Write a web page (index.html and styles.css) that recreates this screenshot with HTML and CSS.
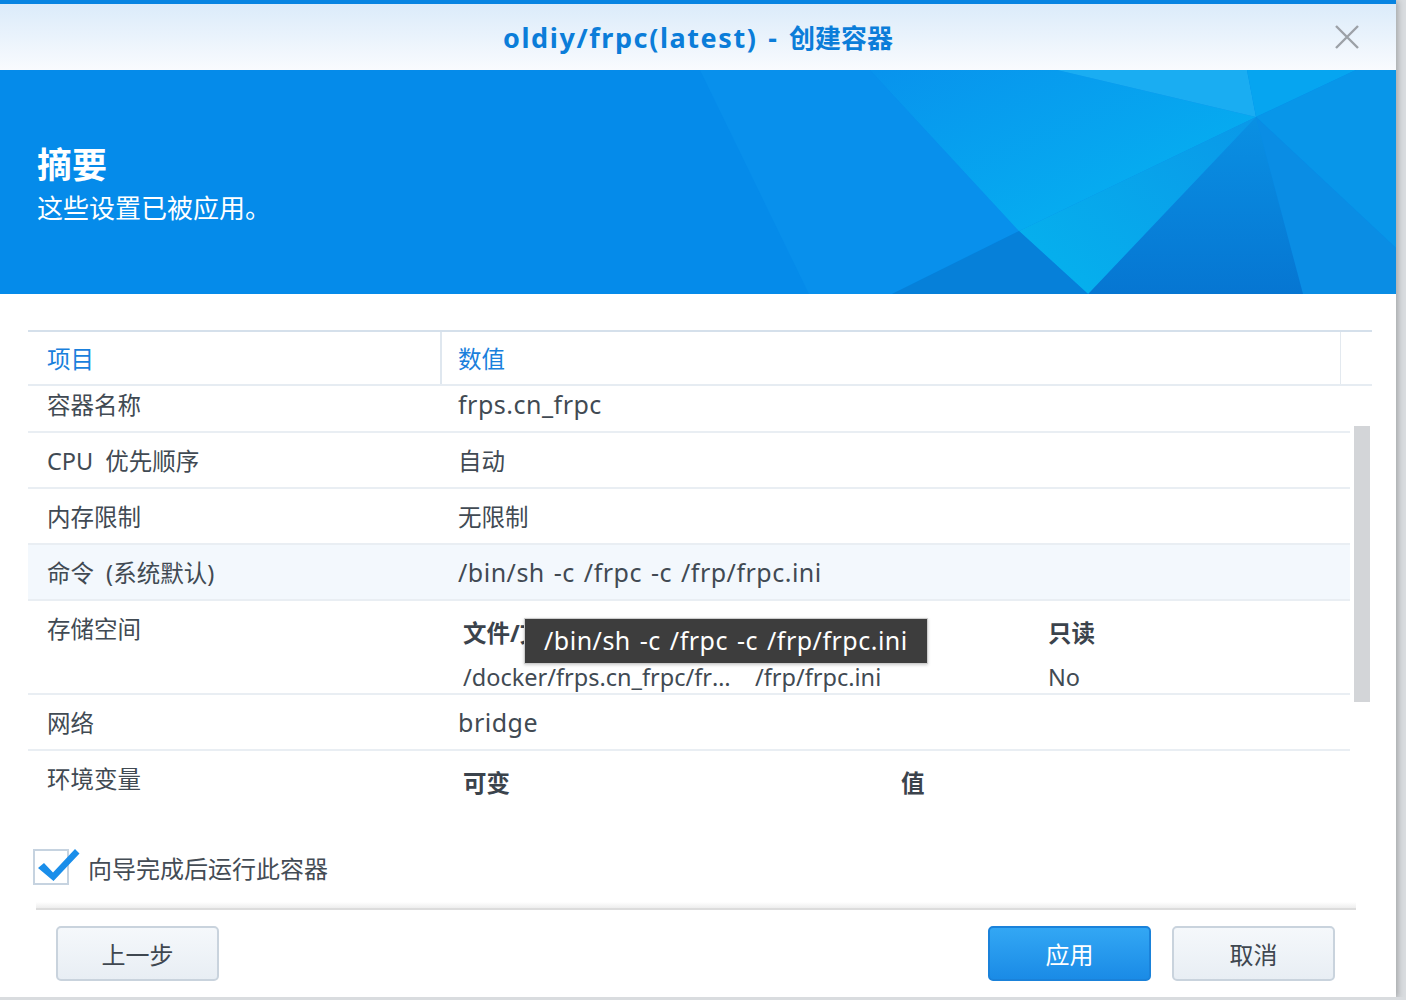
FILE: index.html
```html
<!DOCTYPE html>
<html lang="zh-CN">
<head>
  <meta charset="UTF-8">
  <title>oldiy/frpc(latest) - 创建容器</title>
  <link rel="stylesheet" href="styles.css">
</head>
<body>

<div class="window">
  <div class="topline"></div>

  <!-- 标题栏 -->
  <div class="titlebar">
    <div class="title"><span class="title-latin">oldiy/frpc(latest) - </span>创建容器</div>
    <svg class="close" width="26" height="26" viewBox="0 0 26 26">
      <path d="M2 2 L24 24 M24 2 L2 24" stroke="#9ca1a7" stroke-width="2.4" fill="none"/>
    </svg>
  </div>

  <!-- 蓝色横幅 -->
  <div class="banner">
    <svg class="banner-bg" width="1396" height="224" viewBox="0 0 1396 224" preserveAspectRatio="none">
      <defs>
        <linearGradient id="g1" x1="0" y1="0" x2="1" y2="1">
          <stop offset="0" stop-color="#0893ed"/>
          <stop offset="1" stop-color="#05b6f1"/>
        </linearGradient>
        <linearGradient id="g2" x1="0" y1="0" x2="0" y2="1">
          <stop offset="0" stop-color="#0a90e3"/>
          <stop offset="1" stop-color="#0676d2"/>
        </linearGradient>
        <linearGradient id="g3" x1="1" y1="0" x2="0" y2="1">
          <stop offset="0" stop-color="#0a98e8"/>
          <stop offset="1" stop-color="#05b3ee"/>
        </linearGradient>
      </defs>
      <polygon points="700,0 870,0 1019,161 892,224 809,224" fill="#0890ec"/>
      <polygon points="870,0 1057,0 1256,47 1019,161" fill="url(#g1)"/>
      <polygon points="1057,0 1247,0 1256,47" fill="#1aadf2"/>
      <polygon points="1247,0 1356,0 1256,47" fill="#06a5f0"/>
      <polygon points="1356,0 1396,0 1396,178 1256,47" fill="#0896e9"/>
      <polygon points="1256,47 1396,178 1396,224 1303,224" fill="#0a8de4"/>
      <polygon points="1256,47 1303,224 1088,224" fill="url(#g2)"/>
      <polygon points="1256,47 1019,161 1088,224" fill="url(#g3)"/>
      <polygon points="1019,161 892,224 1088,224" fill="#0680d9"/>
    </svg>
    <div class="banner-text">
      <div class="banner-title">摘要</div>
      <div class="banner-sub">这些设置已被应用。</div>
    </div>
  </div>

  <!-- 摘要表格 -->
  <div class="content">
    <div class="grid-head">
      <div class="head-cell col-key">项目</div>
      <div class="head-cell col-val">数值</div>
      <div class="head-gutter"></div>
    </div>

    <div class="grid-body">
      <div class="rows">
        <div class="row">
          <div class="cell key">容器名称</div>
          <div class="cell val latin">frps.cn_frpc</div>
        </div>
        <div class="row">
          <div class="cell key">CPU 优先顺序</div>
          <div class="cell val">自动</div>
        </div>
        <div class="row">
          <div class="cell key">内存限制</div>
          <div class="cell val">无限制</div>
        </div>
        <div class="row hover">
          <div class="cell key">命令 (系统默认)</div>
          <div class="cell val latin">/bin/sh -c /frpc -c /frp/frpc.ini</div>
        </div>
        <div class="row tall">
          <div class="cell key top">存储空间</div>
          <div class="cell val inner">
            <div class="sub-table storage">
              <div class="sub-head">文件/文件夹</div>
              <div class="sub-head">装载路径</div>
              <div class="sub-head">只读</div>
              <div class="sub-val ellipsis">/docker/frps.cn_frpc/frpc.ini</div>
              <div class="sub-val">/frp/frpc.ini</div>
              <div class="sub-val">No</div>
            </div>
            <div class="tooltip latin">/bin/sh -c /frpc -c /frp/frpc.ini</div>
          </div>
        </div>
        <div class="row">
          <div class="cell key">网络</div>
          <div class="cell val latin">bridge</div>
        </div>
        <div class="row tall">
          <div class="cell key top">环境变量</div>
          <div class="cell val inner">
            <div class="sub-table env">
              <div class="sub-head">可变</div>
              <div class="sub-head">值</div>
            </div>
          </div>
        </div>
      </div>
      <div class="scroll-track">
        <div class="scroll-thumb"></div>
      </div>
    </div>

    <div class="check-row">
      <div class="checkbox">
        <svg class="check" width="46" height="38" viewBox="0 0 46 38">
          <path d="M2 20 L8 15 L17 24.5 L39 1 L43.5 5.5 L17.5 33 Z" fill="#1a8eea"/>
        </svg>
      </div>
      <span class="check-label">向导完成后运行此容器</span>
    </div>
  </div>

  <!-- 底部按钮 -->
  <div class="footer">
    <div class="separator"></div>
    <div class="buttons">
      <button class="btn">上一步</button>
      <div class="spacer"></div>
      <button class="btn primary">应用</button>
      <button class="btn">取消</button>
    </div>
  </div>
</div>

</body>
</html>
```

FILE: styles.css
```css
body {
  margin: 0;
  padding: 0;
  background-color: #d9dcdf;
  font-family: "Noto Sans", "Noto Sans CJK SC", sans-serif;
  color: #414a53;
  overflow: hidden;
}

.window {
  width: 1396px;
  height: 997px;
  background-color: white;
  display: flex;
  flex-direction: column;
  box-shadow: 2px 1px 6px rgba(0,0,0,0.25);
}

.topline {
  height: 4px;
  background-color: #0784e2;
}

.titlebar {
  height: 66px;
  background: linear-gradient(to bottom, #dbebfa, #f9fbfe);
  display: flex;
  align-items: center;
  justify-content: center;
  position: relative;
}

.title {
  font-size: 26px;
  font-weight: bold;
  color: #0b7dd9;
}

.title-latin {
  font-size: 27px;
  letter-spacing: 1.6px;
  word-spacing: 2px;
}

.close {
  position: absolute;
  right: 36px;
  top: 20px;
}

.banner {
  height: 224px;
  background-color: #058bea;
  position: relative;
  overflow: hidden;
}

.banner-bg {
  position: absolute;
  left: 0;
  top: 0;
}

.banner-text {
  position: relative;
  padding: 72px 0 0 37px;
  color: white;
}

.banner-title {
  font-size: 35px;
  font-weight: bold;
  line-height: 46px;
}

.banner-sub {
  font-size: 26px;
  line-height: 40px;
}

.content {
  padding: 36px 24px 0 28px;
}

.grid-head {
  display: flex;
  border-top: 2px solid #d5e0eb;
  border-bottom: 2px solid #e6ecf2;
  height: 52px;
}

.head-cell {
  font-size: 23.5px;
  color: #1a80dc;
  display: flex;
  align-items: center;
}

.col-key {
  width: 393px;
  padding-left: 19px;
  border-right: 2px solid #dfe7ef;
}

.col-val {
  width: 882px;
  padding-left: 16px;
  border-right: 1px solid #e3e9ef;
}

.head-gutter {
  flex: 1;
}

.grid-body {
  display: flex;
  height: 444px;
  overflow: hidden;
}

.rows {
  width: 1322px;
  margin-top: -9px;
}

.row {
  display: grid;
  grid-template-columns: 412px 1fr;
  min-height: 54px;
  border-bottom: 2px solid #e9eef3;
  font-size: 23.5px;
}

.row.hover {
  background-color: #f3f8fd;
}

.row.tall {
  min-height: 92px;
}

.cell {
  display: flex;
  align-items: center;
  white-space: nowrap;
}

.cell.key {
  padding-left: 19px;
  word-spacing: 6px;
}

.cell.val {
  padding-left: 18px;
}

.latin {
  font-size: 25px;
  letter-spacing: 0.5px;
  word-spacing: 2px;
}

.cell.top {
  align-items: flex-start;
  padding-top: 13px;
  line-height: 30px;
}

.cell.inner {
  display: block;
  position: relative;
  padding-left: 23px;
}

.sub-table {
  display: grid;
  padding-top: 17px;
  line-height: 30px;
}

.sub-table.storage {
  grid-template-columns: 292px 293px 250px;
  row-gap: 14px;
}

.sub-table.env {
  grid-template-columns: 438px 200px;
}

.sub-head {
  font-weight: bold;
  color: #3b434c;
}

.sub-val {
  padding-right: 20px;
}

.ellipsis {
  overflow: hidden;
  text-overflow: ellipsis;
}

.tooltip {
  position: absolute;
  left: 84px;
  top: 17px;
  height: 44px;
  width: 383px;
  padding-left: 19px;
  line-height: 43px;
  background-color: #3d3d3d;
  color: white;
  border: 1px solid #cdcdcd;
  box-shadow: 0 1px 3px rgba(0,0,0,0.2);
  white-space: nowrap;
}

.scroll-track {
  width: 22px;
  display: flex;
  justify-content: center;
}

.scroll-thumb {
  width: 16px;
  height: 276px;
  margin-top: 40px;
  margin-left: 2px;
  background-color: #d3d5d8;
}

.check-row {
  display: flex;
  align-items: center;
  margin-top: 19px;
  margin-left: 5px;
  height: 36px;
}

.checkbox {
  width: 32px;
  height: 32px;
  border: 2px solid #c6d3e0;
  background-color: white;
  position: relative;
}

.check {
  position: absolute;
  left: 1px;
  top: -3px;
}

.check-label {
  margin-left: 19px;
  font-size: 24px;
  color: #444c55;
}

.footer {
  margin-top: auto;
}

.separator {
  margin-left: 36px;
  width: 1320px;
  height: 6px;
  background: linear-gradient(to bottom, #ffffff, #ededed);
  border-bottom: 2px solid #dcdcdc;
}

.buttons {
  display: flex;
  gap: 21px;
  padding: 16px 61px 16px 56px;
}

.spacer {
  flex: 1;
}

.btn {
  width: 163px;
  height: 55px;
  border: 2px solid #c9d3dd;
  border-radius: 5px;
  background: linear-gradient(to bottom, #f5f8fb, #e8eef4);
  font-family: "Noto Sans", "Noto Sans CJK SC", sans-serif;
  font-size: 24px;
  color: #3f4750;
  cursor: pointer;
}

.btn.primary {
  border-color: #1a82da;
  background: linear-gradient(to bottom, #33a7f4, #1a8be6);
  color: white;
}
```
